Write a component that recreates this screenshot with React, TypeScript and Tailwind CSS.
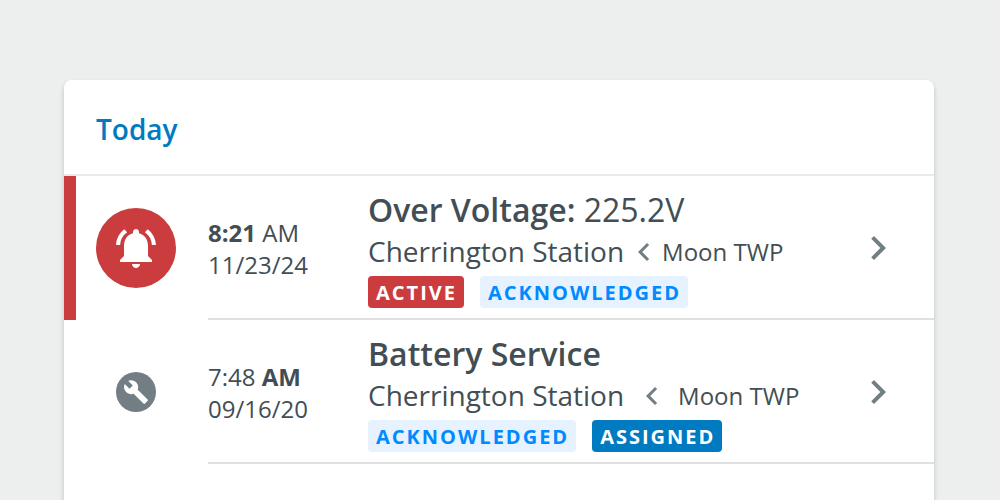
import type { ReactNode } from "react";
import {
  MdBuild,
  MdChevronLeft,
  MdChevronRight,
  MdNotificationsActive,
} from "react-icons/md";

type TagKind = "active" | "acknowledged" | "assigned";

const tagStyles: Record<TagKind, string> = {
  active: "bg-[#ca3c3d] text-white",
  acknowledged: "bg-[#e6f2ff] text-[#018aff]",
  assigned: "bg-[#007bc1] text-white",
};

function Tag({ kind }: { kind: TagKind }) {
  return (
    <li
      className={`h-8 rounded pr-[7px] pl-2 text-xl leading-[34px] font-bold tracking-[2px] uppercase ${tagStyles[kind]}`}
    >
      {kind}
    </li>
  );
}

interface EventRowProps {
  icon: ReactNode;
  alarm?: boolean;
  time: ReactNode;
  date: string;
  title: ReactNode;
  label: string;
  wideTrail?: boolean;
  tags: TagKind[];
}

function EventRow({ icon, alarm, time, date, title, label, wideTrail, tags }: EventRowProps) {
  return (
    <li className={`flex border-l-[12px] pl-5 ${alarm ? "border-[#ca3c3d]" : "border-transparent"}`}>
      <div className="flex w-20 shrink-0 items-center justify-center">{icon}</div>
      <div className="ml-8 flex h-36 min-w-0 flex-1 items-center border-b-2 border-[#e0e0e0] pt-0.5 pr-8">
        <div className="w-40 shrink-0 pt-0.5 text-2xl leading-8">
          <p>{time}</p>
          <p>{date}</p>
        </div>
        <div className="min-w-0 flex-1 whitespace-nowrap">
          <h3 className="text-[32px] leading-[44px] font-semibold">{title}</h3>
          <p className="flex h-10 items-center">
            <span className="pb-0.5 text-[28px] leading-[38px]">Cherrington Station</span>
            <span className={`flex items-center text-2xl ${wideTrail ? "gap-2 pl-2.5" : "pl-0.5"}`}>
              <MdChevronLeft className="size-9 text-[#727e84]" aria-hidden />
              Moon TWP
            </span>
          </p>
          <ul className="mt-1 flex gap-4">
            {tags.map((kind) => (
              <Tag key={kind} kind={kind} />
            ))}
          </ul>
        </div>
        <button type="button" aria-label={label} className="shrink-0 cursor-pointer text-[#727e84]">
          <MdChevronRight className="size-12" aria-hidden />
        </button>
      </div>
    </li>
  );
}

export default function App() {
  return (
    <main className="flex min-h-screen flex-col bg-[#edefee] pt-20 pr-[66px] pl-16 font-['Open_Sans','Noto_Sans',sans-serif] text-[#424e54]">
      <section className="flex-1 rounded-t-lg bg-white shadow-[0_3px_5px_rgba(0,0,0,0.2)]">
        <h2 className="flex h-24 items-center border-b-2 border-[#e8eaea] px-8 pt-1 text-[28px] leading-10 font-semibold text-[#007bc1]">
          Today
        </h2>
        <ul>
          <EventRow
            alarm
            icon={
              <span className="flex size-20 items-center justify-center rounded-full bg-[#ca3c3d] text-white">
                <MdNotificationsActive className="size-12" aria-hidden />
              </span>
            }
            time={
              <>
                <b>8:21</b> AM
              </>
            }
            date="11/23/24"
            title={
              <>
                Over Voltage: <span className="font-normal">225.2V</span>
              </>
            }
            label="Open Over Voltage"
            tags={["active", "acknowledged"]}
          />
          <EventRow
            icon={
              <span className="flex size-10 items-center justify-center rounded-full bg-[#727e84] text-white">
                <MdBuild className="size-[26px]" aria-hidden />
              </span>
            }
            time={
              <>
                7:48 <b>AM</b>
              </>
            }
            date="09/16/20"
            title="Battery Service"
            label="Open Battery Service"
            wideTrail
            tags={["acknowledged", "assigned"]}
          />
        </ul>
      </section>
    </main>
  );
}
